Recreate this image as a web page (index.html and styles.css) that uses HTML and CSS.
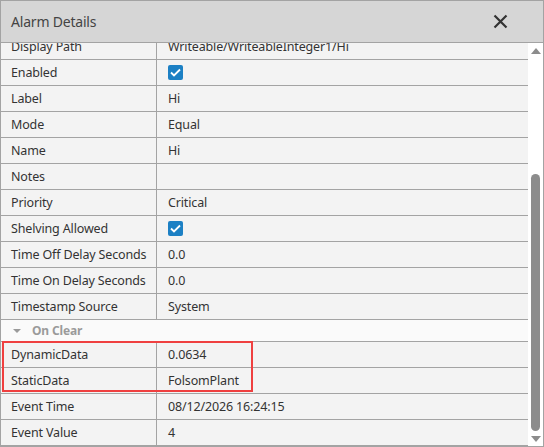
FILE: index.html
```html
<!DOCTYPE html>
<html lang="en">
<head>
  <meta charset="UTF-8">
  <meta name="viewport" content="width=device-width, initial-scale=1.0">
  <title>Alarm Details</title>
  <link rel="stylesheet" href="styles.css">
</head>
<body>
  <div class="dialog">
    <div class="dialog-header">
      <span class="dialog-title">Alarm Details</span>
      <svg class="close" width="15" height="15" viewBox="0 0 15 15">
        <path d="M1.5 1.5 L13.5 13.5 M13.5 1.5 L1.5 13.5" stroke="#333" stroke-width="2.2" fill="none"/>
      </svg>
    </div>
    <div class="dialog-body">
      <div class="grid">
        <div class="grid-rows">
          <div class="row"><div class="label">Display Path</div><div class="value">Writeable/WriteableInteger1/Hi</div></div>
          <div class="row"><div class="label">Enabled</div><div class="value"><span class="check"><svg width="11" height="9" viewBox="0 0 11 9"><path d="M1 4.5 L4 7.5 L10 1.5" stroke="#fff" stroke-width="1.8" fill="none"/></svg></span></div></div>
          <div class="row"><div class="label">Label</div><div class="value">Hi</div></div>
          <div class="row"><div class="label">Mode</div><div class="value">Equal</div></div>
          <div class="row"><div class="label">Name</div><div class="value">Hi</div></div>
          <div class="row"><div class="label">Notes</div><div class="value"></div></div>
          <div class="row"><div class="label">Priority</div><div class="value">Critical</div></div>
          <div class="row"><div class="label">Shelving Allowed</div><div class="value"><span class="check"><svg width="11" height="9" viewBox="0 0 11 9"><path d="M1 4.5 L4 7.5 L10 1.5" stroke="#fff" stroke-width="1.8" fill="none"/></svg></span></div></div>
          <div class="row"><div class="label">Time Off Delay Seconds</div><div class="value">0.0</div></div>
          <div class="row"><div class="label">Time On Delay Seconds</div><div class="value">0.0</div></div>
          <div class="row"><div class="label">Timestamp Source</div><div class="value">System</div></div>
          <div class="group-row"><span class="caret"></span>On Clear</div>
          <div class="row"><div class="label">DynamicData</div><div class="value">0.0634</div></div>
          <div class="row"><div class="label">StaticData</div><div class="value">FolsomPlant</div></div>
          <div class="row"><div class="label">Event Time</div><div class="value">08/12/2026 16:24:15</div></div>
          <div class="row"><div class="label">Event Value</div><div class="value">4</div></div>
        </div>
        <!-- highlight around the On Clear data rows -->
        <div class="highlight"></div>
      </div>
      <div class="scrollbar">
        <span class="arrow up"></span>
        <div class="track"><div class="thumb"></div></div>
        <span class="arrow down"></span>
      </div>
    </div>
  </div>
</body>
</html>
```

FILE: styles.css
```css
html, body {
  margin: 0;
  padding: 0;
  background-color: #fff;
}
body {
  font-family: "Noto Sans", "Open Sans", sans-serif;
  font-size: 12.5px;
  letter-spacing: -0.15px;
  color: #333;
}
.dialog {
  width: 542px;
  height: 445px;
  border: 1px solid #a3a3a3;
  display: flex;
  flex-direction: column;
  overflow: hidden;
}
.dialog-header {
  height: 41px;
  flex: none;
  border-bottom: 1px solid #a3a3a3;
  background-color: #d6d6d6;
  display: flex;
  align-items: center;
  justify-content: space-between;
  padding: 0 35px 0 10px;
}
.dialog-title {
  font-size: 14px;
  letter-spacing: -0.2px;
  color: #444;
}
.close {
  display: block;
}
.dialog-body {
  flex: 1;
  display: flex;
  min-height: 0;
}
.grid {
  flex: 1;
  position: relative;
  overflow: hidden;
}
.grid-rows {
  margin-top: -9px;
}
.row {
  display: flex;
  height: 25px;
  border-bottom: 1px solid #a3a3a3;
  background-color: #f3f3f3;
}
.label {
  width: 145px;
  flex: none;
  padding-left: 10px;
  padding-bottom: 1px;
  border-right: 1px solid #a3a3a3;
  display: flex;
  align-items: center;
  white-space: nowrap;
}
.value {
  flex: 1;
  padding-left: 11px;
  padding-bottom: 1px;
  display: flex;
  align-items: center;
  white-space: nowrap;
}
.check {
  width: 15px;
  height: 15px;
  border-radius: 2px;
  background-color: #1c80c4;
  display: flex;
  align-items: center;
  justify-content: center;
}
.check svg {
  display: block;
}
.group-row {
  height: 21px;
  border-bottom: 1px solid #a3a3a3;
  background-color: #fafafa;
  display: flex;
  align-items: center;
  padding-left: 12px;
  font-size: 12px;
  font-weight: bold;
  color: #9a9a9a;
}
.caret {
  width: 0;
  height: 0;
  border-left: 4px solid transparent;
  border-right: 4px solid transparent;
  border-top: 4px solid #9a9a9a;
  margin-right: 11px;
}
.highlight {
  position: absolute;
  left: 1px;
  top: 298px;
  width: 247px;
  height: 47px;
  border: 2.5px solid #ef4040;
}
.scrollbar {
  width: 15px;
  flex: none;
  background-color: #fff;
  display: flex;
  flex-direction: column;
  align-items: center;
  padding: 5px 0 4px;
  box-sizing: border-box;
}
.arrow {
  width: 0;
  height: 0;
  border-left: 5px solid transparent;
  border-right: 5px solid transparent;
}
.arrow.up {
  border-bottom: 6px solid #8c8c8c;
}
.arrow.down {
  border-top: 6px solid #8c8c8c;
}
.track {
  flex: 1;
  width: 9px;
  display: flex;
  flex-direction: column;
  justify-content: flex-end;
  padding: 6px 0 5px;
}
.thumb {
  height: 257px;
  border-radius: 5px;
  background-color: #8c8c8c;
}
```
